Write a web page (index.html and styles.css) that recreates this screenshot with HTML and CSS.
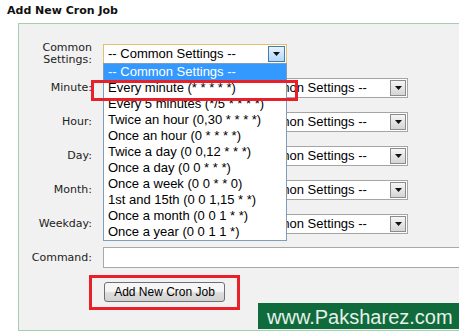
FILE: index.html
```html
<!DOCTYPE html>
<html lang="en">
<head>
    <meta charset="UTF-8">
    <title>Add New Cron Job</title>
    <link rel="stylesheet" href="styles.css">
</head>
<body>
<div class="page">
    <h2 class="title">Add New Cron Job</h2>

    <div class="box">
        <!-- common settings, dropdown open -->
        <div class="row">
            <label class="lbl two">Common<br>Settings:</label>
            <div class="sel open">
                <span class="txt">-- Common Settings --</span>
                <span class="arr"><svg width="7" height="4" viewBox="0 0 7 4"><polygon points="0,0 7,0 3.5,4" fill="#111"/></svg></span>
                <ul class="list">
                    <li class="on">-- Common Settings --</li>
                    <li>Every minute (* * * * *)</li>
                    <li>Every 5 minutes (*/5 * * * *)</li>
                    <li>Twice an hour (0,30 * * * *)</li>
                    <li>Once an hour (0 * * * *)</li>
                    <li>Twice a day (0 0,12 * * *)</li>
                    <li>Once a day (0 0 * * *)</li>
                    <li>Once a week (0 0 * * 0)</li>
                    <li>1st and 15th (0 0 1,15 * *)</li>
                    <li>Once a month (0 0 1 * *)</li>
                    <li>Once a year (0 0 1 1 *)</li>
                </ul>
            </div>
        </div>

        <div class="row">
            <label class="lbl">Minute:</label>
            <span class="inp small"></span>
            <div class="sel">
                <span class="txt">-- Common Settings --</span>
                <span class="arr"><svg width="7" height="4" viewBox="0 0 7 4"><polygon points="0,0 7,0 3.5,4" fill="#111"/></svg></span>
            </div>
        </div>

        <div class="row">
            <label class="lbl">Hour:</label>
            <span class="inp small"></span>
            <div class="sel">
                <span class="txt">-- Common Settings --</span>
                <span class="arr"><svg width="7" height="4" viewBox="0 0 7 4"><polygon points="0,0 7,0 3.5,4" fill="#111"/></svg></span>
            </div>
        </div>

        <div class="row">
            <label class="lbl">Day:</label>
            <span class="inp small"></span>
            <div class="sel">
                <span class="txt">-- Common Settings --</span>
                <span class="arr"><svg width="7" height="4" viewBox="0 0 7 4"><polygon points="0,0 7,0 3.5,4" fill="#111"/></svg></span>
            </div>
        </div>

        <div class="row">
            <label class="lbl">Month:</label>
            <span class="inp small"></span>
            <div class="sel">
                <span class="txt">-- Common Settings --</span>
                <span class="arr"><svg width="7" height="4" viewBox="0 0 7 4"><polygon points="0,0 7,0 3.5,4" fill="#111"/></svg></span>
            </div>
        </div>

        <div class="row">
            <label class="lbl">Weekday:</label>
            <span class="inp small"></span>
            <div class="sel">
                <span class="txt">-- Common Settings --</span>
                <span class="arr"><svg width="7" height="4" viewBox="0 0 7 4"><polygon points="0,0 7,0 3.5,4" fill="#111"/></svg></span>
            </div>
        </div>

        <div class="row cmd">
            <label class="lbl">Command:</label>
            <span class="inp wide"></span>
        </div>

        <div class="row btnrow">
            <span class="lbl"></span>
            <button type="button" class="btn">Add New Cron Job</button>
        </div>
    </div>

    <!-- red highlight marks -->
    <div class="mark m1"></div>
    <div class="mark m2"></div>

    <div class="wm">www.Paksharez.com</div>
</div>
</body>
</html>
```

FILE: styles.css
```css
body{
    margin: 0;
    overflow: hidden;
    background: #fff;
}

.page{
    position: relative;
    width: 459px;
    height: 334px;
    overflow: hidden;
}

.title{
    margin: 0;
    padding: 4px 7px 0;
    font: bold 11px/13px "DejaVu Sans", Verdana, sans-serif;
    color: #111;
}

/*外框，右边超出画面*/
.box{
    margin: 6px 0 0 18px;
    width: 460px;
    border: 1px solid #a6cfb2;
    background: #f1f1f1;
    padding: 20px 0 28px;
}

.row{
    display: flex;
    align-items: center;
    height: 20px;
    margin-bottom: 14px;
}
.row.cmd{
    height: 21px;
    margin-top: -1px;
}
.row.btnrow{
    margin-bottom: 0;
}

.lbl{
    width: 73px;
    margin-right: 11px;
    flex: none;
    text-align: right;
    font: 11px/12px "DejaVu Sans", Verdana, sans-serif;
    color: #222;
}

.inp{
    display: block;
    box-sizing: border-box;
    height: 20px;
    background: #fff;
    border: 1px solid #a8a8a8;
}
.inp.small{
    width: 127px;
    margin-right: 4px;
}
.inp.wide{
    width: 376px;
    height: 21px;
}

/*下拉框*/
.sel{
    position: relative;
    display: flex;
    box-sizing: border-box;
    width: 174px;
    height: 20px;
    padding: 1px;
    background: #fff;
    border: 1px solid #a5a5a5;
}
.sel .txt{
    flex: 1;
    padding-left: 3px;
    overflow: hidden;
    white-space: nowrap;
    font: 13px/16px "Liberation Sans", Arial, sans-serif;
    color: #000;
}
.sel .arr{
    display: flex;
    align-items: center;
    justify-content: center;
    box-sizing: border-box;
    width: 16px;
    border: 1px solid #8c8c8c;
    background: linear-gradient(#f5f5f5, #d5d5d5);
}
.sel.open{
    width: 184px;
    border-color: #e2c16d;
}
.sel.open .arr{
    width: 17px;
    border-color: #3f7db0;
    background: linear-gradient(#e6f3fd, #b2d8f6);
}

.list{
    position: absolute;
    left: -1px;
    top: 18px;
    z-index: 2;
    width: 184px;
    box-sizing: border-box;
    margin: 0;
    padding: 0;
    list-style: none;
    background: #fff;
    border: 1px solid #7f9db9;
}
.list li{
    height: 16px;
    padding-left: 4px;
    white-space: nowrap;
    font: 13px/16px "Liberation Sans", Arial, sans-serif;
    color: #000;
}
.list li.on{
    background: #3399ff;
    color: #fff;
}

.btn{
    margin-left: 1px;
    width: 121px;
    height: 20px;
    padding: 0;
    border: 1px solid #707070;
    border-radius: 3px;
    background: linear-gradient(#f6f6f6 45%, #dddddd 55%, #d2d2d2);
    font: 12px/16px "Liberation Sans", Arial, sans-serif;
    color: #000;
}

.mark{
    position: absolute;
    z-index: 3;
    box-sizing: border-box;
    border: 3px solid #e8202a;
}
.m1{
    left: 91px;
    top: 80px;
    width: 207px;
    height: 21px;
}
.m2{
    left: 89px;
    top: 275px;
    width: 151px;
    height: 35px;
}

/*水印*/
.wm{
    position: absolute;
    z-index: 3;
    left: 258px;
    top: 303px;
    width: 201px;
    height: 26px;
    box-sizing: border-box;
    padding-left: 9px;
    background: #0f6b3b;
    color: #e8f0ea;
    font: 20px/28px "Liberation Sans", Arial, sans-serif;
    white-space: nowrap;
    overflow: hidden;
}
```
